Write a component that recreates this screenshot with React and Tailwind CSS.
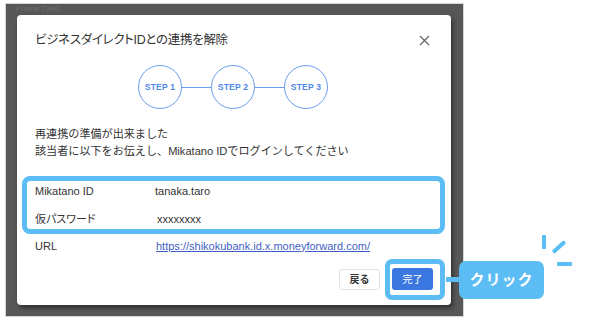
import React from "react";

const F = { fontFamily: '"Liberation Sans", "Noto Sans CJK JP", sans-serif' };
const P = { fontFeatureSettings: '"palt"' };

function Step({ n }) {
  return (
    <div className="w-[44px] h-[44px] rounded-full border border-[#6d9df0] flex items-center justify-center text-[8.5px] font-bold text-[#4f86ea] tracking-[0.2px]">
      STEP {n}
    </div>
  );
}

export default function App() {
  return (
    <div className="relative w-[592px] h-[320px] bg-white overflow-hidden text-[#333]" style={F}>
      <div className="ml-[5px] mt-[3px] w-[459px] h-[314px] border border-[#d6d6d6] bg-[#575757] px-[11px]">
        <div className="h-[11px] text-[8px] leading-[9px] text-[#6e6e6e] -ml-[1px]">Frame 7240</div>
        <div className="relative w-[434px] h-[290px] bg-white rounded-[4px] shadow-[2px_3px_4px_rgba(0,0,0,0.45)] px-[18px] pt-[17px]">
          <div className="flex items-center justify-between h-[16px]">
            <div className="text-[12.5px] leading-[16px] text-[#333] tracking-[-0.3px]" style={P}>ビジネスダイレクトIDとの連携を解除</div>
            <svg width="11" height="11" viewBox="0 0 11 11" className="mr-[3px]">
              <path d="M1 1L10 10M10 1L1 10" stroke="#6b6b6b" strokeWidth="1.4" />
            </svg>
          </div>
          <div className="mt-[17px] flex items-center justify-center pr-[2px]">
            <Step n={1} />
            <div className="w-[29px] h-px bg-[#6d9df0]" />
            <Step n={2} />
            <div className="w-[29px] h-px bg-[#6d9df0]" />
            <Step n={3} />
          </div>
          <div className="mt-[17px] text-[11.1px] leading-[17px] text-[#333]">
            <div>再連携の準備が出来ました</div>
            <div>該当者に以下をお伝えし、Mikatano IDでログインしてください</div>
          </div>
          <div className="mt-[16px] -ml-[13px] w-[423px] border-[5px] border-[#5bbdf4] rounded-[8px] pl-[8px] flex flex-col gap-[8px] text-[11px]" style={P}>
            <div className="h-[20px] flex items-center">
              <div className="w-[120px]">Mikatano ID</div>
              <div>tanaka.taro</div>
            </div>
            <div className="h-[20px] flex items-center">
              <div className="w-[122px]">仮パスワード</div>
              <div>xxxxxxxx</div>
            </div>
          </div>
          <div className="mt-[2px] h-[20px] flex items-center text-[11px]">
            <div className="w-[121px]">URL</div>
            <div className="text-[#3f5fc4] underline">https://shikokubank.id.x.moneyforward.com/</div>
          </div>
          <div className="mt-[12px] flex justify-end gap-[12px]">
            <div className="w-[41px] h-[21px] mt-px rounded-[3px] border border-[#e2e2e2] bg-white flex items-center justify-center text-[10px] font-bold text-[#333]">戻る</div>
            <div className="relative w-[41px] h-[22px] rounded-[3px] bg-[#3a77e0] flex items-center justify-center text-[10px] text-white">
              完了
              <div className="absolute left-[-7px] top-[-9px] right-[-12px] bottom-[-10px] border-[5px] border-[#5bbdf4] rounded-[7px]" />
            </div>
          </div>
        </div>
      </div>
      <div className="absolute left-[446px] top-[277px] w-[15px] h-[5px] bg-[#5bbdf4]" />
      <div className="absolute left-[459px] top-[261px] w-[85px] h-[38px] rounded-[7px] bg-[#5bbdf4] flex items-center justify-center text-white text-[15px] font-bold tracking-[1px]">クリック</div>
      <div className="absolute left-[542px] top-[235px] w-[4px] h-[14px] rounded-[1px] bg-[#5bbdf4]" />
      <div className="absolute left-[551px] top-[245px] w-[16px] h-[4px] rounded-[1px] bg-[#5bbdf4] -rotate-[42deg]" />
      <div className="absolute left-[557px] top-[262px] w-[15px] h-[4px] rounded-[1px] bg-[#5bbdf4]" />
    </div>
  );
}
